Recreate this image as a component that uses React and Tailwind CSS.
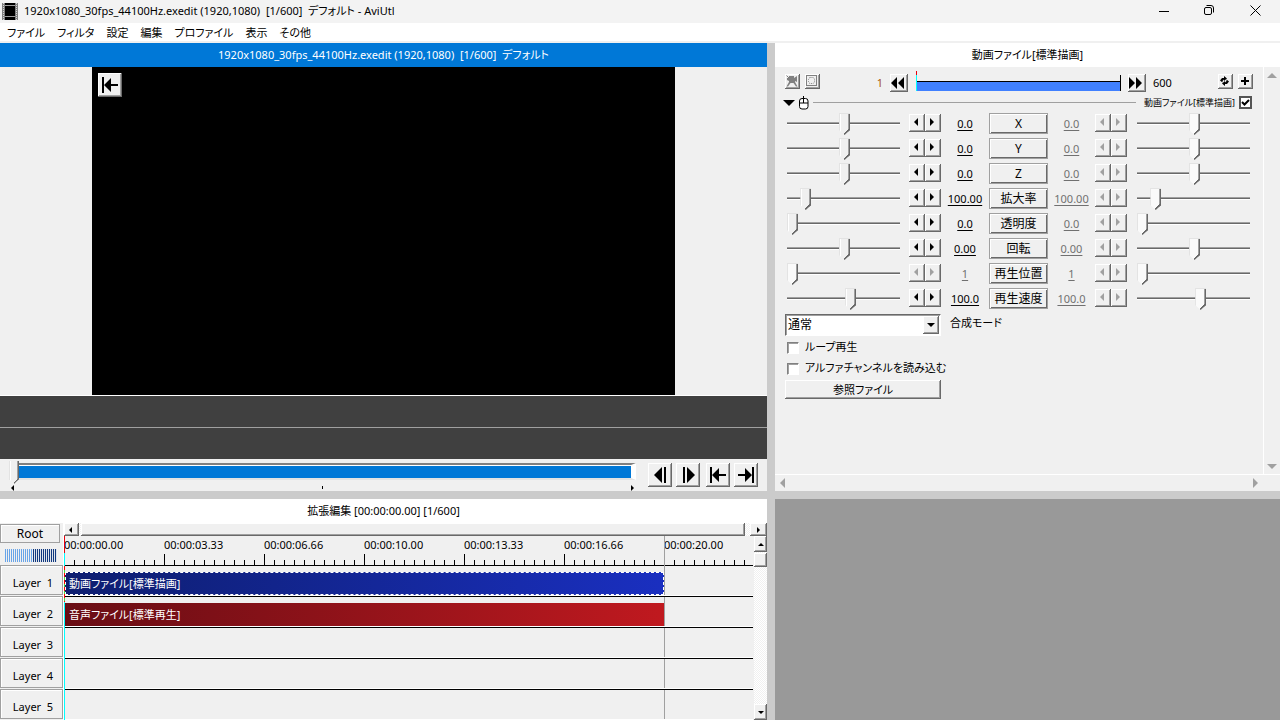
import React, { useState } from "react";

const RAISED =
  "bg-[#f0f0f0] shadow-[inset_-1px_-1px_0_#696969,inset_1px_1px_0_#ffffff,inset_-2px_-2px_0_#a0a0a0]";
const FLAT = "bg-[#f0f0f0] border border-[#a0a0a0] shadow-[inset_1px_1px_0_#ffffff]";
const HATCH =
  "bg-[repeating-conic-gradient(#ffffff_0_25%,#f0f0f0_0_50%)] bg-[length:2px_2px]";

const PARAMS = [
  { name: "X", value: "0.0", pos: 51 },
  { name: "Y", value: "0.0", pos: 51 },
  { name: "Z", value: "0.0", pos: 51 },
  { name: "拡大率", value: "100.00", pos: 13 },
  { name: "透明度", value: "0.0", pos: 0 },
  { name: "回転", value: "0.00", pos: 51 },
  { name: "再生位置", value: "1", pos: 0, locked: true },
  { name: "再生速度", value: "100.0", pos: 57 },
];

const MENU = ["ファイル", "フィルタ", "設定", "編集", "プロファイル", "表示", "その他"];
const TIMES = [
  "00:00:00.00",
  "00:00:03.33",
  "00:00:06.66",
  "00:00:10.00",
  "00:00:13.33",
  "00:00:16.66",
  "00:00:20.00",
];
const LAYERS = [
  { id: 1, clip: "動画ファイル[標準描画]", kind: "video" },
  { id: 2, clip: "音声ファイル[標準再生]", kind: "audio" },
  { id: 3 },
  { id: 4 },
  { id: 5 },
];

function Arrow({ dir, className = "", size = 4 }) {
  const shapes = {
    left: `${size},0 0,${size} ${size},${size * 2}`,
    right: `0,0 ${size},${size} 0,${size * 2}`,
    up: `0,${size} ${size},0 ${size * 2},${size}`,
    down: `0,0 ${size * 2},0 ${size},${size}`,
  };
  const wide = dir === "up" || dir === "down";
  return (
    <svg
      width={wide ? size * 2 : size}
      height={wide ? size : size * 2}
      fill="currentColor"
      className={className}
      aria-hidden="true"
    >
      <polygon points={shapes[dir]} />
    </svg>
  );
}

function IconButton({ label, className, children, disabled }) {
  return (
    <button
      type="button"
      aria-label={label}
      disabled={disabled}
      className={`flex shrink-0 items-center justify-center ${RAISED} ${className}`}
    >
      {children}
    </button>
  );
}

function ParamSlider({ label, pos, disabled }) {
  return (
    <input
      type="range"
      aria-label={label}
      defaultValue={pos}
      disabled={disabled}
      className={`h-[21px] w-0 min-w-0 flex-1 appearance-none bg-transparent [&::-webkit-slider-runnable-track]:h-[3px] [&::-webkit-slider-runnable-track]:bg-[linear-gradient(#a0a0a0_0_1px,#696969_1px_2px,#ffffff_2px)] [&::-webkit-slider-thumb]:-mt-[9px] [&::-webkit-slider-thumb]:h-[22px] [&::-webkit-slider-thumb]:w-[11px] [&::-webkit-slider-thumb]:appearance-none [&::-webkit-slider-thumb]:[clip-path:polygon(0_0,100%_0,100%_17px,50%_100%,0_17px)] [&::-webkit-slider-thumb]:bg-no-repeat [&::-webkit-slider-thumb]:bg-[position:right_bottom,0_0,0_0] [&::-webkit-slider-thumb]:bg-[length:6px_6px,100%_100%,100%_100%] ${
        disabled
          ? "[&::-webkit-slider-thumb]:bg-[image:linear-gradient(135deg,transparent_34%,#696969_34%),linear-gradient(#e3e3e3_0_1px,transparent_1px),linear-gradient(90deg,#e3e3e3_0_1px,#fafafa_1px_9px,#a0a0a0_9px_10px,#696969_10px)]"
          : "[&::-webkit-slider-thumb]:bg-[image:linear-gradient(135deg,transparent_34%,#696969_34%),linear-gradient(#e3e3e3_0_1px,transparent_1px),linear-gradient(90deg,#e3e3e3_0_1px,#ffffff_1px_2px,#f0f0f0_2px_9px,#a0a0a0_9px_10px,#696969_10px)]"
      }`}
    />
  );
}

function Stepper({ label, disabled }) {
  const tone = disabled ? "text-[#a0a0a0]" : "text-black";
  return (
    <div className={`flex h-5 shrink-0 items-center ${tone}`}>
      <IconButton label={`${label} −`} disabled={disabled} className="h-[18px] w-4 pr-[2px] pb-[2px]">
        <Arrow dir="left" />
      </IconButton>
      <IconButton label={`${label} +`} disabled={disabled} className="h-[18px] w-4 pr-[2px] pb-[2px]">
        <Arrow dir="right" />
      </IconButton>
    </div>
  );
}

function ValueText({ value, dim, className }) {
  return (
    <button
      type="button"
      className={`shrink-0 text-center text-[11px] leading-[22px] underline underline-offset-2 ${className} ${
        dim ? "text-[#707070]" : "text-black"
      }`}
    >
      {value}
    </button>
  );
}

function ParamRow({ param }) {
  return (
    <div className="flex h-[25px] items-start pt-[2px]">
      <ParamSlider label={`${param.name} 始点`} pos={param.pos} disabled={param.locked} />
      <div className="w-[9px] shrink-0" />
      <Stepper label={`${param.name} 始点`} disabled={param.locked} />
      <ValueText value={param.value} dim={param.locked} className="w-12" />
      <button
        type="button"
        className="h-[21px] w-[59px] shrink-0 border border-[#a0a0a0] bg-[#f0f0f0] text-[12px] leading-none shadow-[inset_1px_1px_0_#ffffff,inset_-1px_-1px_0_#696969]"
      >
        {param.name}
      </button>
      <ValueText value={param.value} dim className="w-[47px]" />
      <Stepper label={`${param.name} 終点`} disabled />
      <div className="w-[10px] shrink-0" />
      <ParamSlider label={`${param.name} 終点`} pos={param.pos} disabled />
    </div>
  );
}

function SkipStart() {
  return (
    <svg width="16" height="16" viewBox="0 0 16 16" aria-hidden="true">
      <path d="M0 0h2v16H0zM2 8l7-7v6h7v2H9v6z" />
    </svg>
  );
}
function SkipEnd() {
  return (
    <svg width="16" height="16" viewBox="0 0 16 16" aria-hidden="true">
      <path d="M14 0h2v16h-2zM14 8L7 1v6H0v2h7v6z" />
    </svg>
  );
}
function StepBack() {
  return (
    <svg width="13" height="16" viewBox="0 0 13 16" aria-hidden="true">
      <path d="M0 8l8-8v16zM10 0h2v16h-2z" />
    </svg>
  );
}
function StepForward() {
  return (
    <svg width="13" height="16" viewBox="0 0 13 16" aria-hidden="true">
      <path d="M1 0h2v16H1zM5 0l8 8-8 8z" />
    </svg>
  );
}

function TitleBar() {
  return (
    <header className="flex h-[23px] shrink-0 items-center bg-[#f3f3f3]">
      <svg width="16" height="17" viewBox="0 0 16 17" className="ml-[2px]" aria-hidden="true">
        <path fill="#808080" d="M0 0h16v17H0z" />
        <path fill="#000" d="M3 0h10v17H3z" />
        <path stroke="#d8d8d8" strokeDasharray="1 1" d="M1.5 0v17M14.5 0v17" />
        <path stroke="#a0a0a0" d="M3 2.5h10M3 13.5h10" />
      </svg>
      <h1 className="ml-[6px] flex-1 truncate whitespace-pre text-[11px] text-black">
        {"1920x1080_30fps_44100Hz.exedit (1920,1080)  [1/600]  デフォルト - AviUtl"}
      </h1>
      <button type="button" aria-label="最小化" className="flex h-full w-[45px] items-center justify-center pr-[3px]">
        <svg width="10" height="10" aria-hidden="true">
          <path stroke="#000" d="M0 4.5h10" />
        </svg>
      </button>
      <button type="button" aria-label="元に戻す" className="flex h-full w-[46px] items-center justify-center pr-1 pb-[3px]">
        <svg width="10" height="10" fill="none" stroke="#000" aria-hidden="true">
          <rect x="0.5" y="2.5" width="7" height="7" rx="1.5" />
          <path d="M2.5 0.5h4.5a2.5 2.5 0 0 1 2.5 2.5v4.5" />
        </svg>
      </button>
      <button type="button" aria-label="閉じる" className="flex h-full w-[46px] items-center justify-center pr-1 pb-[2px]">
        <svg width="11" height="11" stroke="#000" aria-hidden="true">
          <path d="M0.5 0.5l10 10M10.5 0.5l-10 10" />
        </svg>
      </button>
    </header>
  );
}

function Preview() {
  return (
    <section className="flex min-h-0 min-w-0 flex-col overflow-hidden bg-[#f0f0f0]">
      <h2 className="flex h-6 shrink-0 items-center justify-center bg-[#0078d7] text-[11px] whitespace-pre text-white">
        {"1920x1080_30fps_44100Hz.exedit (1920,1080)  [1/600]  デフォルト"}
      </h2>
      <div className="flex min-h-0 flex-1 justify-center border-b border-white">
        <div className="aspect-video h-full bg-black p-[6px]">
          <IconButton label="先頭へ" className="size-6">
            <SkipStart />
          </IconButton>
        </div>
      </div>
      <div className="flex h-[63px] shrink-0 flex-col bg-[#404040]">
        <div className="h-8 border-b border-[#a0a0a0]" />
      </div>
      <div className="flex h-8 shrink-0 pt-1 pr-[9px] pl-[9px]">
        <div className="mr-3 flex min-w-0 flex-1 flex-col">
          <input
            type="range"
            aria-label="再生位置"
            min="1"
            max="600"
            defaultValue="1"
            className="h-[17px] w-full shrink-0 appearance-none bg-transparent [&::-webkit-slider-runnable-track]:h-[17px] [&::-webkit-slider-runnable-track]:border-t-2 [&::-webkit-slider-runnable-track]:border-r-5 [&::-webkit-slider-runnable-track]:border-b-2 [&::-webkit-slider-runnable-track]:border-t-[#808080] [&::-webkit-slider-runnable-track]:border-r-white [&::-webkit-slider-runnable-track]:border-b-[#e3e3e3] [&::-webkit-slider-runnable-track]:bg-[#0078d7] [&::-webkit-slider-runnable-track]:shadow-[inset_0_1px_0_#ffffff] [&::-webkit-slider-thumb]:-mt-[4px] [&::-webkit-slider-thumb]:h-[23px] [&::-webkit-slider-thumb]:w-[10px] [&::-webkit-slider-thumb]:appearance-none [&::-webkit-slider-thumb]:[clip-path:polygon(0_0,100%_0,100%_18px,50%_100%,0_18px)] [&::-webkit-slider-thumb]:bg-no-repeat [&::-webkit-slider-thumb]:bg-[position:right_bottom,0_0] [&::-webkit-slider-thumb]:bg-[length:5px_5px,100%_100%] [&::-webkit-slider-thumb]:bg-[image:linear-gradient(135deg,transparent_34%,#696969_34%),linear-gradient(90deg,#e3e3e3_0_1px,#ffffff_1px_2px,#f0f0f0_2px_8px,#a0a0a0_8px_9px,#696969_9px)]"
          />
          <div className="mt-[5px] flex h-[5px] items-center justify-between pr-[2px] pl-[2px]">
            <Arrow dir="left" size={3} />
            <div className="h-[3px] w-px bg-black" />
            <Arrow dir="right" size={3} />
          </div>
        </div>
        <div className="flex gap-[6px]">
          <div className="flex gap-1">
            <IconButton label="前のフレーム" className="size-6">
              <StepBack />
            </IconButton>
            <IconButton label="次のフレーム" className="size-6">
              <StepForward />
            </IconButton>
          </div>
          <div className="flex gap-1">
            <IconButton label="先頭へ移動" className="size-6">
              <SkipStart />
            </IconButton>
            <IconButton label="末尾へ移動" className="size-6">
              <SkipEnd />
            </IconButton>
          </div>
        </div>
      </div>
    </section>
  );
}

function ClassicCheck({ id, label }) {
  return (
    <div className="flex h-[21px] items-center gap-[6px] pl-[2px]">
      <input
        id={id}
        type="checkbox"
        className="size-[12px] shrink-0 appearance-none border border-t-[#808080] border-r-white border-b-white border-l-[#808080] bg-white shadow-[inset_1px_1px_0_#a0a0a0] checked:bg-[#0078d7]"
      />
      <label htmlFor={id} className="text-[11px]">
        {label}
      </label>
    </div>
  );
}

function Settings() {
  const [enabled, setEnabled] = useState(true);
  return (
    <section className="flex min-h-0 min-w-0 flex-col overflow-hidden bg-[#f0f0f0]">
      <h2 className="flex h-6 shrink-0 items-center justify-center bg-white text-[11px]">
        動画ファイル[標準描画]
      </h2>
      <div className="flex min-h-0 flex-1">
        <div className="min-w-0 flex-1 overflow-hidden">
          <div className="flex h-7 items-start pt-[7px] pr-[10px] pl-[10px]">
            <IconButton label="カメラ制御" className="size-[15px] pr-[2px] pb-[2px]">
              <svg width="12" height="12" viewBox="0 0 12 12" aria-hidden="true">
                <path
                  fill="#808080"
                  d="M3 1h5v2l3-2v6L9 6v1l2.500 4.500H10L7.500 8h-3L2 11.500H.5L3 7V6L1 5V3h2z"
                />
                <path stroke="#808080" d="M0.500 0.500l3 3" />
              </svg>
            </IconButton>
            <IconButton label="クリッピング" className="ml-[5px] size-[15px] pr-[2px] pb-[2px]">
              <svg width="11" height="11" viewBox="0 0 11 11" fill="none" stroke="#808080" aria-hidden="true">
                <rect x="0.5" y="0.5" width="10" height="10" />
                <rect x="2.5" y="2.5" width="6" height="6" rx="2" strokeDasharray="1 1" />
              </svg>
            </IconButton>
            <span className="ml-auto pr-[7px] pl-2 text-[11px] leading-[18px] text-[#a85810]">1</span>
            <IconButton label="前の区間" className="size-[18px] pr-[3px] pb-px">
              <svg width="13" height="12" viewBox="0 0 13 12" aria-hidden="true">
                <path d="M0 6l6-6v12zM7 6l6-6v12z" />
              </svg>
            </IconButton>
            <div className="ml-2 flex h-[17px] w-[205px] self-start">
              <div className="flex w-px flex-col">
                <div className="-mt-[3px] h-1 bg-red-600" />
                <div className="flex-1 bg-[#00ffff]" />
              </div>
              <div className="mt-[7px] flex-1 border-t border-black bg-[#4080ff]" />
              <div className="mt-px w-px bg-black" />
            </div>
            <IconButton label="次の区間" className="ml-[7px] size-[18px] pr-[3px] pb-px">
              <svg width="13" height="12" viewBox="0 0 13 12" aria-hidden="true">
                <path d="M0 0l6 6-6 6zM7 0l6 6-6 6z" />
              </svg>
            </IconButton>
            <span className="ml-[7px] w-[65px] text-[11px] leading-[18px]">600</span>
            <IconButton label="更新" className="size-[15px] pr-[2px] pb-[2px]">
              <svg width="9" height="10" viewBox="0 0 9 10" aria-hidden="true">
                <path d="M4 0l3 2.500L4 5V3.500L2.500 5v1.500L0 4.500 2 2h2zM5 5v1.500L6.500 5V3.500L9 5.500 7 8H5v2L2 7.500z" />
              </svg>
            </IconButton>
            <IconButton label="追加" className="ml-[5px] size-[15px] pr-px pb-px">
              <svg width="8" height="8" aria-hidden="true">
                <path stroke="#000" strokeWidth="2" d="M0 4h8M4 0v8" />
              </svg>
            </IconButton>
          </div>
          <div className="flex h-4 items-center pr-[11px] pb-px pl-2">
            <button type="button" aria-label="折りたたむ" className="shrink-0">
              <Arrow dir="down" size={6} />
            </button>
            <svg width="10" height="14" viewBox="0 0 10 14" fill="#fff" stroke="#000" className="ml-1 shrink-0" aria-hidden="true">
              <rect x="0.500" y="2.500" width="8.500" height="10.500" rx="2.500" />
              <path d="M0.500 7h8.500M4.500 0v7" />
            </svg>
            <div className="mx-1 h-px min-w-0 flex-1 bg-[#a0a0a0]" />
            <label htmlFor="effect-enabled" className="ml-1 text-[9px] whitespace-nowrap">
              動画ファイル[標準描画]
            </label>
            <span className="relative ml-1 flex size-[13px] shrink-0">
              <input
                id="effect-enabled"
                type="checkbox"
                checked={enabled}
                onChange={(e) => setEnabled(e.target.checked)}
                className="size-[13px] appearance-none border-2 border-[#555555] bg-white"
              />
              {enabled && (
                <svg
                  width="13"
                  height="13"
                  fill="none"
                  stroke="#000"
                  strokeWidth="2"
                  className="pointer-events-none absolute inset-0"
                  aria-hidden="true"
                >
                  <path d="M3 6l2.500 2.500L10 4" />
                </svg>
              )}
            </span>
          </div>
          <div className="pr-[13px] pl-3">
            {PARAMS.map((p) => (
              <ParamRow key={p.name} param={p} />
            ))}
          </div>
          <div className="flex flex-col pt-[3px] pl-[10px]">
            <div className="flex gap-[9px]">
              <span className="relative block h-[22px] w-[156px]">
                <select
                  id="blend-mode"
                  className="block h-[22px] w-full appearance-none border border-t-[#696969] border-r-white border-b-white border-l-[#696969] bg-white pr-5 pl-[2px] text-[12px] leading-5 shadow-[inset_1px_1px_0_#a0a0a0]"
                >
                  <option>通常</option>
                </select>
                <span
                  className={`pointer-events-none absolute top-[2px] right-[2px] flex h-[18px] w-4 items-center justify-center ${RAISED}`}
                >
                  <Arrow dir="down" />
                </span>
              </span>
              <label htmlFor="blend-mode" className="text-[11px] leading-[18px]">
                合成モード
              </label>
            </div>
            <div className="mt-px mb-px">
              <ClassicCheck id="loop" label="ループ再生" />
              <ClassicCheck id="alpha" label="アルファチャンネルを読み込む" />
            </div>
            <button type="button" className={`block h-[19px] w-[156px] text-[11px] leading-none ${RAISED}`}>
              参照ファイル
            </button>
          </div>
        </div>
        <div className="flex w-[17px] shrink-0 flex-col items-center justify-between border-l border-white pt-[6px] pb-[5px] text-[#a0a0a0]">
          <Arrow dir="up" size={5} />
          <Arrow dir="down" size={5} />
        </div>
      </div>
      <div className="flex h-[17px] shrink-0 items-center justify-between border-t border-white pr-[22px] pl-[5px] text-[#a0a0a0]">
        <Arrow dir="left" size={5} />
        <Arrow dir="right" size={5} />
      </div>
    </section>
  );
}

function Ruler() {
  const ticks = Array.from({ length: 69 }, (_, i) => i);
  return (
    <div className="flex h-[30px] flex-col justify-between overflow-hidden border-b border-black">
      <div className="flex">
        {TIMES.map((t) => (
          <span key={t} className="w-[100px] shrink-0 text-[11px] leading-[18px]">
            {t}
          </span>
        ))}
      </div>
      <svg width="690" height="12" className="shrink-0" aria-hidden="true">
        {ticks.map((i) => (
          <rect key={i} x={i * 10} y={i % 10 ? 6 : 0} width="1" height="12" />
        ))}
      </svg>
    </div>
  );
}

function Timeline() {
  return (
    <section className="flex min-h-0 min-w-0 flex-col overflow-hidden bg-[#f0f0f0]">
      <h2 className="flex h-6 shrink-0 items-center justify-center bg-white text-[11px]">
        拡張編集 [00:00:00.00] [1/600]
      </h2>
      <div className="flex min-h-0 flex-1">
        <div className="flex w-16 shrink-0 flex-col border-r border-white">
          <div className="flex h-[42px] shrink-0 flex-col gap-[6px] pt-[1px]">
            <button type="button" className={`h-[19px] w-[60px] text-[12px] leading-none ${FLAT}`}>
              Root
            </button>
            <div className="ml-[5px] flex h-[13px] w-[52px]">
              <div className="w-[28px] bg-[repeating-linear-gradient(90deg,#68a4e8_0_1px,#f0f0f0_1px_2px)]" />
              <div className="flex-1 bg-[repeating-linear-gradient(90deg,#103880_0_1px,#e0e4ea_1px_2px)]" />
            </div>
          </div>
          {LAYERS.map((l) => (
            <button
              type="button"
              key={l.id}
              className={`mb-px h-[30px] w-[63px] shrink-0 pt-1 pl-[3px] text-[11px] leading-none whitespace-pre ${FLAT}`}
            >
              {`Layer  ${l.id}`}
            </button>
          ))}
        </div>
        <div className="flex min-w-0 flex-1 flex-col">
          <div className={`flex h-[13px] shrink-0 ${HATCH}`}>
            <IconButton label="左へスクロール" className="h-full w-[15px] pr-[2px]">
              <Arrow dir="left" size={3} />
            </IconButton>
            <div className={`mr-[5px] ml-[2px] h-full flex-1 ${RAISED}`} />
            <IconButton label="右へスクロール" className="h-full w-[17px]">
              <Arrow dir="right" size={3} />
            </IconButton>
          </div>
          <div className="flex min-h-0 flex-1">
            <div className="relative min-w-0 flex-1 overflow-hidden">
              <div className="absolute top-0 left-[600px] h-full w-px bg-[#a0a0a0]" />
              <Ruler />
              {LAYERS.map((l) => (
                <div
                  key={l.id}
                  className="relative flex h-[31px] border-b border-black pt-[6px] shadow-[inset_0_-1px_0_#ffffff]"
                >
                  {l.kind === "video" && (
                    <div className="ml-px flex h-[23px] w-[599px] items-center border border-dashed border-white bg-linear-to-r from-[#0e1e70] to-[#1a2fc0] bg-origin-border pt-[2px] pl-[3px] text-[11px] text-white">
                      {l.clip}
                    </div>
                  )}
                  {l.kind === "audio" && (
                    <div className="ml-px flex h-[23px] w-[599px] items-center bg-linear-to-r from-[#690d14] to-[#c0191f] pt-[2px] pl-1 text-[11px] text-white">
                      {l.clip}
                    </div>
                  )}
                </div>
              ))}
              <div className="absolute top-0 left-0 flex h-full w-px flex-col">
                <div className="h-[17px] bg-red-600" />
                <div className="h-[13px] bg-[#00ffff]" />
                <div className="h-[36px] bg-[repeating-linear-gradient(#ff0000_0_4px,#40e040_4px_7px)]" />
                <div className="flex-1 bg-[#00ffff]" />
              </div>
            </div>
            <div className={`ml-px flex w-[13px] shrink-0 flex-col ${HATCH}`}>
              <IconButton label="上へスクロール" className="h-4 w-full">
                <Arrow dir="up" size={3} />
              </IconButton>
              <div className={`mt-px h-[14px] shrink-0 ${RAISED}`} />
              <div className="flex-1" />
              <IconButton label="下へスクロール" className="h-4 w-full">
                <Arrow dir="down" size={3} />
              </IconButton>
            </div>
          </div>
        </div>
      </div>
    </section>
  );
}

export default function App() {
  return (
    <div className="flex h-screen flex-col overflow-hidden bg-[#cbcbcb] font-['Noto_Sans','Noto_Sans_CJK_JP',sans-serif] text-black [font-feature-settings:'palt']">
      <TitleBar />
      <nav className="flex h-5 shrink-0 items-center gap-3 border-b-2 border-[#f0f0f0] bg-white pl-[7px] text-[11px]">
        {MENU.map((m) => (
          <button type="button" key={m} className="leading-none">
            {m}
          </button>
        ))}
      </nav>
      <main className="grid min-h-0 flex-1 grid-cols-[minmax(0,767fr)_minmax(0,505fr)] grid-rows-[minmax(0,448fr)_minmax(0,221fr)] gap-2">
        <Preview />
        <Settings />
        <Timeline />
        <div className="bg-[#999999]" />
      </main>
    </div>
  );
}
